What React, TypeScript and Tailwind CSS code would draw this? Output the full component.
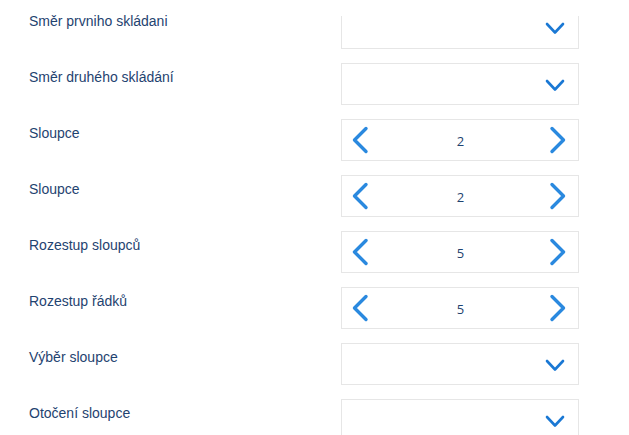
import React from "react";

type Row = { label: string; kind: "select" | "stepper"; value?: number };

const rows: Row[] = [
  { label: "Směr prvniho skládani", kind: "select" },
  { label: "Směr druhého skládání", kind: "select" },
  { label: "Sloupce", kind: "stepper", value: 2 },
  { label: "Sloupce", kind: "stepper", value: 2 },
  { label: "Rozestup sloupců", kind: "stepper", value: 5 },
  { label: "Rozestup řádků", kind: "stepper", value: 5 },
  { label: "Výběr sloupce", kind: "select" },
  { label: "Otočení sloupce", kind: "select" },
];

function ChevronDown() {
  return (
    <svg width="20" height="13" viewBox="0 0 20 13" className="block">
      <polyline points="2,2 10,10.5 18,2" fill="none" stroke="#1a78d4" strokeWidth="2.6" strokeLinecap="round" strokeLinejoin="round" />
    </svg>
  );
}

function ChevronLeft() {
  return (
    <svg width="18" height="28" viewBox="0 0 18 28" className="block">
      <polyline points="15,2.5 3.5,14 15,25.5" fill="none" stroke="#2a89df" strokeWidth="3.4" strokeLinecap="round" strokeLinejoin="round" />
    </svg>
  );
}

function ChevronRight() {
  return (
    <svg width="18" height="28" viewBox="0 0 18 28" className="block">
      <polyline points="3,2.5 14.5,14 3,25.5" fill="none" stroke="#2a89df" strokeWidth="3.4" strokeLinecap="round" strokeLinejoin="round" />
    </svg>
  );
}

function Select({ clipped }: { clipped?: boolean }) {
  return (
    <div
      className={
        clipped
          ? "mt-[9px] h-[33px] w-[238px] border border-t-0 border-[#e6e6e6] flex justify-end items-start pr-[13px] pt-[6px]"
          : "h-[42px] w-[238px] border border-[#e6e6e6] flex justify-end items-start pr-[13px] pt-[15px]"
      }
    >
      <ChevronDown />
    </div>
  );
}

function Stepper({ value }: { value: number }) {
  return (
    <div className="h-[42px] w-[238px] border border-[#e6e6e6] flex items-center justify-between pl-[9px] pr-[11px]">
      <ChevronLeft />
      <span
        className="pt-[3px] pl-[3px] text-[13px] text-[#1f4370]"
        style={{ fontFamily: '"Open Sans", "Noto Sans", sans-serif' }}
      >
        {value}
      </span>
      <ChevronRight />
    </div>
  );
}

export default function App() {
  return (
    <div
      className="w-[629px] h-[435px] overflow-hidden bg-white pt-[7px] pl-[29px]"
      style={{ fontFamily: '"Liberation Sans", Arial, sans-serif' }}
    >
      {rows.map((r, i) => (
        <div key={i} className="flex h-[56px]">
          <div className="w-[312px] pt-[6px] text-[14px] leading-[16px] text-[#1f4370]">{r.label}</div>
          {r.kind === "select" ? <Select clipped={i === 0} /> : <Stepper value={r.value ?? 0} />}
        </div>
      ))}
    </div>
  );
}
